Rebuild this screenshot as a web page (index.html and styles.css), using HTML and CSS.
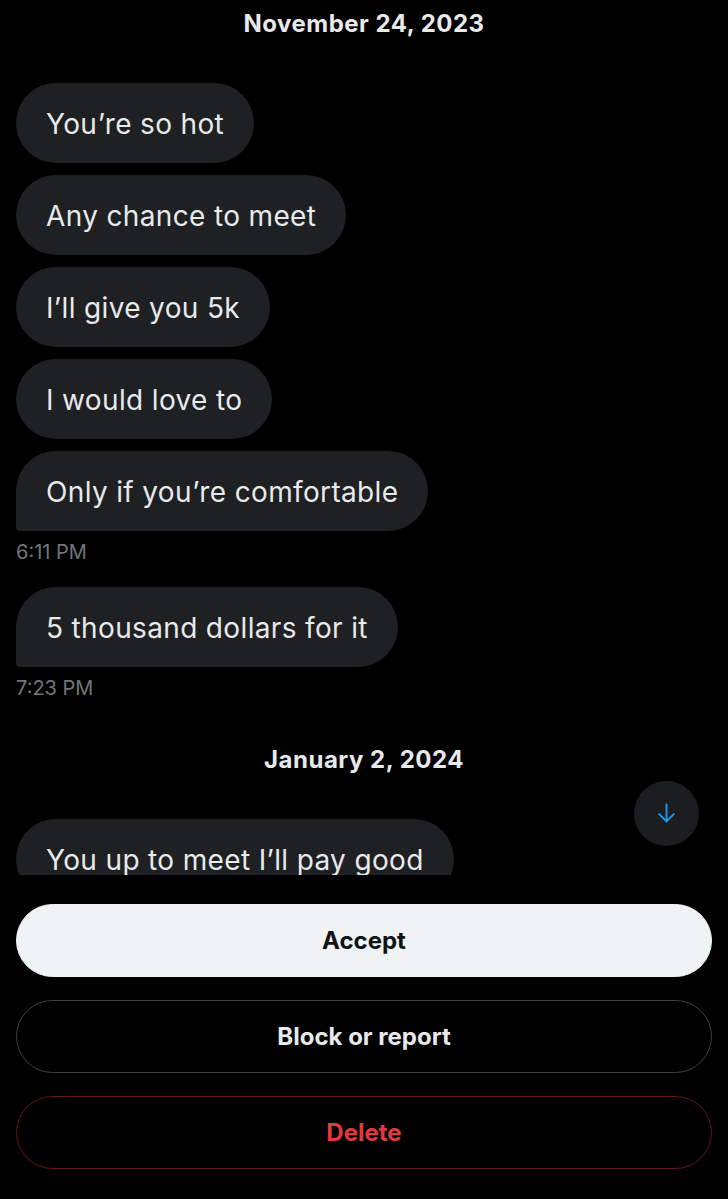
FILE: index.html
```html
<!DOCTYPE html>
<html lang="en">
<head>
  <meta charset="UTF-8" />
  <meta name="viewport" content="width=device-width, initial-scale=1.0" />
  <title>Message request</title>
  <link rel="stylesheet" href="styles.css">
</head>
<body>

  <div class="thread">
    <div class="day">November 24, 2023</div>

    <div class="group">
      <div class="bubble">You’re so hot</div>
      <div class="bubble">Any chance to meet</div>
      <div class="bubble">I’ll give you 5k</div>
      <div class="bubble">I would love to</div>
      <div class="bubble last">Only if you’re comfortable</div>
    </div>
    <div class="time">6:11 PM</div>

    <div class="group">
      <div class="bubble last">5 thousand dollars for it</div>
    </div>
    <div class="time">7:23 PM</div>

    <div class="day">January 2, 2024</div>

    <div class="group">
      <div class="bubble">You up to meet I’ll pay good</div>
    </div>

    <button class="scroll-down" aria-label="Scroll to bottom">
      <svg viewBox="0 0 24 24" width="27" height="27">
        <path d="M12 4v15M5.5 12.5L12 19l6.5-6.5" fill="none" stroke="#1d9bf0" stroke-width="1.7" stroke-linecap="round" stroke-linejoin="round"/>
      </svg>
    </button>
  </div>

  <div class="actions">
    <button class="btn accept">Accept</button>
    <button class="btn block">Block or report</button>
    <button class="btn delete">Delete</button>
  </div>

</body>
</html>
```

FILE: styles.css
```css
body {
  margin: 0;
  background: #000;
  color: #e7e9ea;
  font-family: Inter, "Liberation Sans", sans-serif;
}

.thread {
  position: relative; /* for the scroll button */
  height: 875px;
  overflow: hidden;
  padding: 0 16px;
}

.day {
  height: 46px;
  line-height: 48px;
  text-align: center;
  font-size: 24px;
  font-weight: 700;
  letter-spacing: 0.5px;
  margin-bottom: 37px;
}

.time + .day {
  margin-top: 33px;
}

.group {
  display: flex;
  flex-direction: column;
  align-items: flex-start;
  gap: 12px;
}

.bubble {
  height: 80px;
  display: flex;
  align-items: center;
  padding: 2px 30px 0;
  box-sizing: border-box;
  background: #1f2023;
  border-radius: 40px;
  font-size: 28px;
  letter-spacing: 0.35px;
  white-space: nowrap;
}

.bubble.last {
  border-bottom-left-radius: 4px;
}

.time {
  margin: 4px 0 20px;
  height: 32px;
  line-height: 34px;
  font-size: 20px;
  color: #71767b;
}

.scroll-down {
  position: absolute;
  top: 781px;
  left: 634px;
  width: 65px;
  height: 65px;
  border: none;
  border-radius: 50%;
  background: #1c1d20;
  display: flex;
  align-items: center;
  justify-content: center;
  padding: 0;
}

.actions {
  padding: 29px 16px 0;
  display: flex;
  flex-direction: column;
  gap: 23px;
}

.btn {
  height: 73px;
  border-radius: 37px;
  font-family: inherit;
  font-size: 24px;
  font-weight: 700;
  background: transparent;
  border: 1.5px solid #3e4144;
  color: #e7e9ea;
}

.btn.accept {
  background: #eff3f4;
  border-color: #eff3f4;
  color: #0f1419;
}

.btn.delete {
  border-color: #67161a;
  color: #e2393b;
}
```
